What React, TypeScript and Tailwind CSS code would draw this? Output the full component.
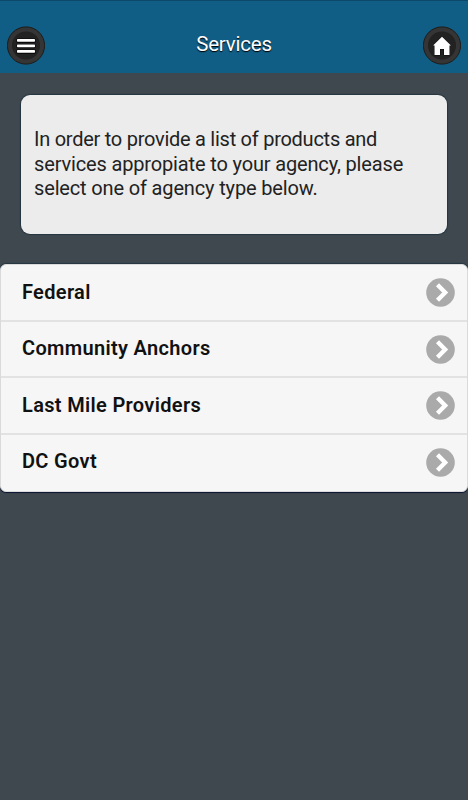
const AGENCY_TYPES = ['Federal', 'Community Anchors', 'Last Mile Providers', 'DC Govt'];

function MenuButton() {
  return (
    <button aria-label="Menu" className="h-[39px] w-[38px]">
      <svg width="38" height="39" viewBox="0 0 38 39">
        <circle cx="19" cy="19.5" r="18.6" fill="#353535" stroke="#1d1d19" strokeWidth="1" />
        <circle cx="19" cy="19.5" r="14" fill="#222" />
        <g fill="#050505">
          <rect x="9.5" y="12.5" width="19" height="4.2" rx="1" />
          <rect x="9.5" y="18" width="19" height="4.2" rx="1" />
          <rect x="9.5" y="23.5" width="19" height="4.2" rx="1" />
        </g>
        <g fill="#fff">
          <rect x="10" y="13" width="18" height="2.8" rx="0.7" />
          <rect x="10" y="18.5" width="18" height="2.8" rx="0.7" />
          <rect x="10" y="24" width="18" height="2.8" rx="0.7" />
        </g>
      </svg>
    </button>
  );
}

function HomeButton() {
  return (
    <button aria-label="Home" className="h-[39px] w-[38px]">
      <svg width="38" height="39" viewBox="0 0 38 39">
        <circle cx="19" cy="19.5" r="18.6" fill="#353535" stroke="#1d1d19" strokeWidth="1" />
        <circle cx="19" cy="19.5" r="14" fill="#222" />
        <path
          d="M19 10.8 28 19.6H26.5V29H21V23H17V29H11.5V19.6H10Z"
          fill="#fff"
          stroke="#080808"
          strokeWidth="1"
          paintOrder="stroke"
        />
      </svg>
    </button>
  );
}

function ArrowIcon() {
  return (
    <svg width="29" height="29" viewBox="0 0 29 29" className="shrink-0">
      <circle cx="14.5" cy="14.5" r="14.3" fill="#aaa" />
      <path d="M11.5 6.7 19.2 14.5 11.5 22.3" fill="none" stroke="#fff" strokeWidth="4.3" />
    </svg>
  );
}

export default function App() {
  return (
    <div className="flex min-h-screen w-[468px] flex-col bg-[#40484f] font-['Roboto',sans-serif]">
      <header className="flex h-[73px] items-start justify-between border-t border-[#0d4869] bg-[#105d85] px-[7px] pt-[25px]">
        <MenuButton />
        <h1 className="pt-[4px] text-[20.5px] leading-[28px] font-normal tracking-[-0.2px] text-white [text-shadow:0_1px_1px_#000]">
          Services
        </h1>
        <HomeButton />
      </header>

      {/* Intro */}
      <section className="mx-[21px] mt-[22px] h-[139px] rounded-[9px] bg-[#ececec] pt-[32px] pl-[13px] text-[20px] leading-[24.5px] text-[#222] shadow-[0_0_1px_1px_#243640]">
        <p className="w-[390px] tracking-[-0.15px]">
          <span className="tracking-[-0.26px]">In order to provide a list of products and</span> services appropiate to your agency, please select one of agency type below.
        </p>
      </section>

      {/* Agency types */}
      <ul className="mt-[30px] h-[228px] overflow-hidden rounded-[6px] border border-[#dadada] bg-[#f6f6f6] shadow-[0_1px_1px_#0a1530,0_-1px_1px_#243640]">
        {AGENCY_TYPES.map((name) => (
          <li
            key={name}
            className="flex h-[56.5px] items-center justify-between border-b-2 border-[#e2e2e2] pt-px pr-[12px] pl-[21px] last:border-transparent"
          >
            <span className="pb-[2px] text-[20px] leading-[26px] font-semibold tracking-[0.33px] text-[#111]">{name}</span>
            <ArrowIcon />
          </li>
        ))}
      </ul>
    </div>
  );
}
